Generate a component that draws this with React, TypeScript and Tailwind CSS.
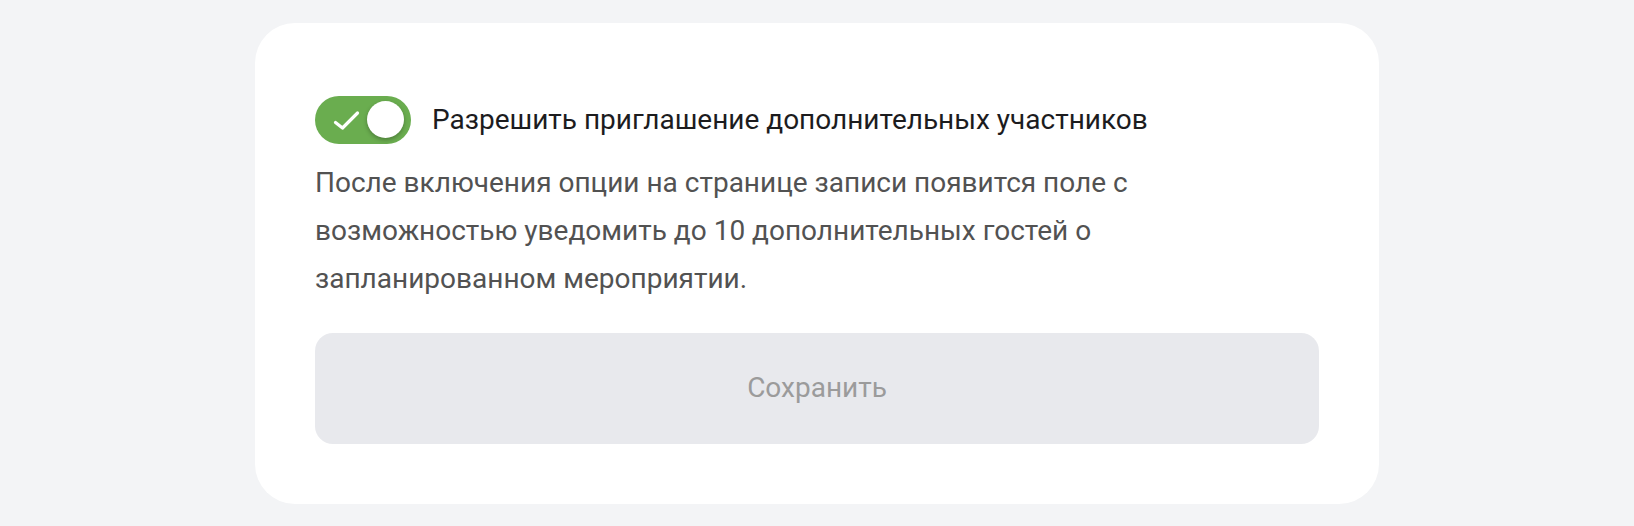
import React, { useState } from 'react';

const Toggle = ({ checked, onChange }: { checked: boolean; onChange: () => void }) => (
  <button
    type="button"
    onClick={onChange}
    className={
      checked
        ? 'relative h-[48px] w-[96px] shrink-0 rounded-full bg-[#6aad4f]'
        : 'relative h-[48px] w-[96px] shrink-0 rounded-full bg-[#d5d7dc]'
    }
  >
    {checked && (
      <svg
        className="absolute left-0 top-0"
        width="96"
        height="48"
        viewBox="0 0 96 48"
        fill="none"
        stroke="white"
        strokeWidth="3.2"
        strokeLinecap="round"
        strokeLinejoin="round"
      >
        <path d="M20.5 26.5l7 5.5L42.5 17" />
      </svg>
    )}
    <span
      className={
        checked
          ? 'absolute left-[52px] top-[5px] h-[37px] w-[37px] rounded-full bg-white shadow-[0_2px_4px_rgba(0,0,0,0.28)]'
          : 'absolute left-[6px] top-[5px] h-[37px] w-[37px] rounded-full bg-white shadow-[0_2px_4px_rgba(0,0,0,0.28)]'
      }
    />
  </button>
);

export default function App() {
  const [allow, setAllow] = useState(true);

  return (
    <div className="flex min-h-screen items-center justify-center bg-[#f3f4f6] font-['Roboto',sans-serif]">
      <div className="w-[1124px] rounded-[40px] bg-white px-[60px] pt-[73px] pb-[60px]">
        <div className="flex items-center gap-[21px]">
          <Toggle checked={allow} onChange={() => setAllow(!allow)} />
          <span className="text-[28px] leading-[48px] text-[#1c1c1e]">
            Разрешить приглашение дополнительных участников
          </span>
        </div>
        <p className="mt-[15px] max-w-[840px] text-[28px] leading-[48px] text-[#525252]">
          После включения опции на странице записи появится поле с возможностью уведомить до 10
          дополнительных гостей о запланированном мероприятии.
        </p>
        <button
          type="button"
          disabled
          className="mt-[30px] flex h-[111px] w-full items-center justify-center rounded-[18px] bg-[#e8e9ed] text-[28px] text-[#9b9b9b]"
        >
          Сохранить
        </button>
      </div>
    </div>
  );
}
